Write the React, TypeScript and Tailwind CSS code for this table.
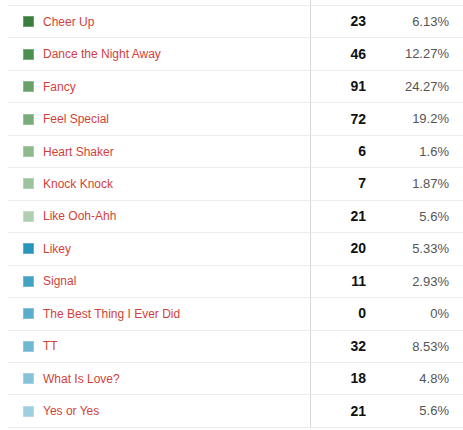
const rows = [
  { name: "Cheer Up", color: "#3a7d3e", n: 23, p: "6.13%" },
  { name: "Dance the Night Away", color: "#4c8f51", n: 46, p: "12.27%" },
  { name: "Fancy", color: "#69a06a", n: 91, p: "24.27%" },
  { name: "Feel Special", color: "#7aab7b", n: 72, p: "19.2%" },
  { name: "Heart Shaker", color: "#8db98d", n: 6, p: "1.6%" },
  { name: "Knock Knock", color: "#9dc39d", n: 7, p: "1.87%" },
  { name: "Like Ooh-Ahh", color: "#b0cfb0", n: 21, p: "5.6%" },
  { name: "Likey", color: "#2a95bb", n: 20, p: "5.33%" },
  { name: "Signal", color: "#44a2c5", n: 11, p: "2.93%" },
  { name: "The Best Thing I Ever Did", color: "#5aaecc", n: 0, p: "0%" },
  { name: "TT", color: "#6fb8d2", n: 32, p: "8.53%" },
  { name: "What Is Love?", color: "#86c3d9", n: 18, p: "4.8%" },
  { name: "Yes or Yes", color: "#9dcfe0", n: 21, p: "5.6%" },
];

export default function App() {
  return (
    <div
      className="w-[463px] h-[430px] bg-white overflow-hidden pl-2"
      style={{ fontFamily: '"Liberation Sans", Arial, sans-serif' }}
    >
      <div className="flex h-[5px]">
        <div className="w-[303px] border-r border-[#d9d9d9]" />
        <div className="flex-1" />
      </div>
      <div className="border-t border-[#ececec]">
        {rows.map((r) => (
          <div key={r.name} className="flex h-[32.46px] border-b border-[#ececec] items-stretch">
            <div className="w-[303px] border-r border-[#d9d9d9] flex items-center pl-[15px]">
              <span
                className="w-[11px] h-[11px] shrink-0"
                style={{ backgroundColor: r.color, boxShadow: "inset 0 0 0 1px rgba(255,255,255,0.25)" }}
              />
              <span className="ml-[9px] text-[12px] text-[#d23f3a]">{r.name}</span>
            </div>
            <div className="w-[55px] flex items-center justify-end text-[14px] font-bold text-[#111]">
              {r.n}
            </div>
            <div className="flex-1 flex items-center justify-end pr-[14px] text-[13px] text-[#555]">
              {r.p}
            </div>
          </div>
        ))}
      </div>
    </div>
  );
}
